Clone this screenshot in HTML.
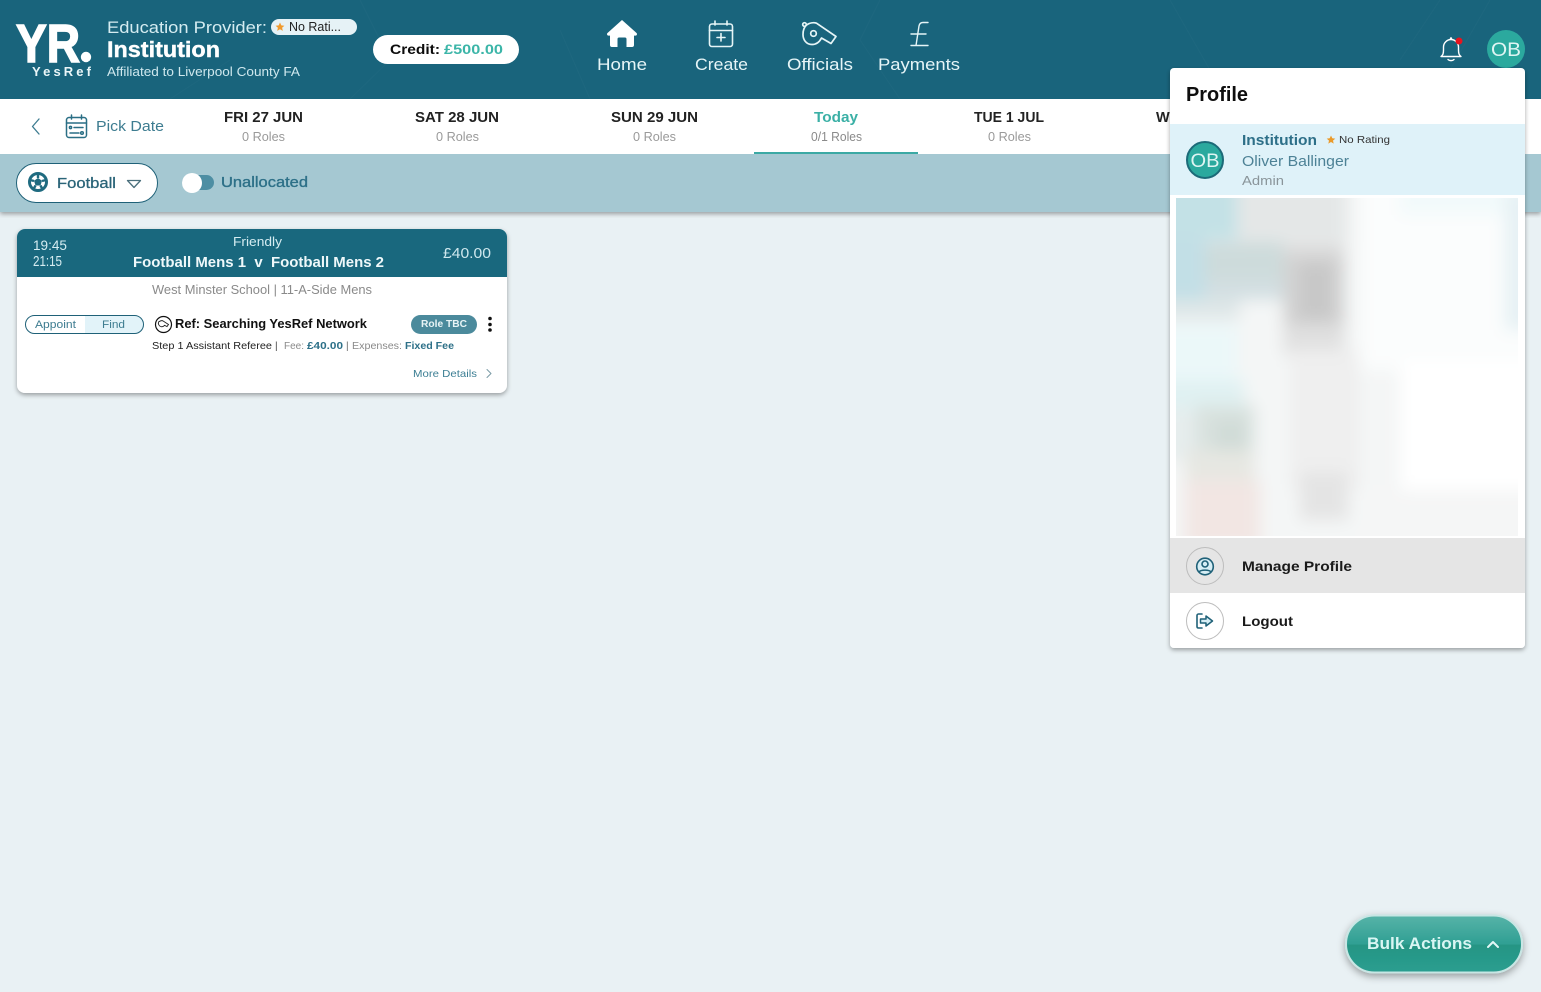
<!DOCTYPE html>
<html lang="en">
<head>
<meta charset="utf-8">
<title>YesRef</title>
<style>
html,body{margin:0;padding:0;width:1541px;height:992px;overflow:hidden;background:#e9f1f4}
svg{display:block}
text{font-family:"Liberation Sans",sans-serif;white-space:pre}
.b{font-weight:700}
</style>
</head>
<body>
<svg width="1541" height="992" viewBox="0 0 1541 992" xmlns="http://www.w3.org/2000/svg">
<defs>
<filter id="sh" x="-10%" y="-10%" width="120%" height="120%"><feDropShadow dx="0" dy="2" stdDeviation="2.5" flood-color="#000" flood-opacity=".35"/></filter>
<filter id="sh2" x="-10%" y="-30%" width="120%" height="170%"><feDropShadow dx="0" dy="3" stdDeviation="4" flood-color="#000" flood-opacity=".35"/></filter>
<filter id="bl" x="-5%" y="-5%" width="110%" height="110%"><feGaussianBlur stdDeviation="8"/></filter>
<clipPath id="im"><rect x="1176" y="198" width="342" height="338"/></clipPath>
<linearGradient id="bk" x1="0" y1="0" x2="0" y2="1"><stop offset="0" stop-color="#58b3a8"/><stop offset=".5" stop-color="#2f9f93"/><stop offset=".52" stop-color="#269584"/><stop offset="1" stop-color="#2a9e90"/></linearGradient>
</defs>

<rect width="1541" height="992" fill="#e9f1f4"/>

<!-- header -->
<rect width="1541" height="99" fill="#19647c"/>
<g stroke="#fff" stroke-opacity=".022" fill="none">
<path d="M1170 0L1210 70M1440 0L1400 60M1490 0L1450 70M880 0L860 40L900 99M560 30L590 99M360 0L390 60L350 99M170 99L230 60"/>
</g>

<!-- logo -->
<text x="16" y="62" class="b" font-size="54" fill="#fff" stroke="#fff" stroke-width="1.600" textLength="64" lengthAdjust="spacingAndGlyphs">YR</text>
<circle cx="86" cy="57" r="5.200" fill="#fff"/>
<text x="32" y="76" class="b" font-size="13" fill="#eaf6f8" textLength="59" lengthAdjust="spacing">YesRef</text>

<text x="107" y="33" font-size="16.500" fill="#d5ecf1" textLength="160" lengthAdjust="spacingAndGlyphs">Education Provider:</text>
<rect x="271" y="19" width="86" height="16" rx="8" fill="#e6f2f6"/>
<path d="M280 22.500l1.300 2.900 3.100.3-2.300 2.100.7 3.100-2.800-1.600-2.800 1.600.7-3.100-2.300-2.100 3.100-.3z" fill="#f09a2e"/>
<text x="289" y="31" font-size="12.500" fill="#222" textLength="52" lengthAdjust="spacingAndGlyphs">No Rati...</text>
<text x="107" y="57" class="b" font-size="22" fill="#fff" stroke="#fff" stroke-width=".4" textLength="113" lengthAdjust="spacingAndGlyphs">Institution</text>
<text x="107" y="76" font-size="12.500" fill="#cfe8ee" textLength="193" lengthAdjust="spacingAndGlyphs">Affiliated to Liverpool County FA</text>

<rect x="373" y="35" width="146" height="29" rx="14.500" fill="#fff"/>
<text x="390" y="54" class="b" font-size="14" fill="#0c0c0c" textLength="50" lengthAdjust="spacingAndGlyphs">Credit:</text>
<text x="444" y="54" class="b" font-size="14" fill="#3bb5a8" textLength="59" lengthAdjust="spacingAndGlyphs">£500.00</text>

<!-- nav -->
<path d="M622 20l14.500 13c1 1 .4 2.600-.9 2.600H634v9.400c0 1.200-.7 2-2 2h-5.500v-8c0-1-.7-1.500-1.500-1.500h-6c-.8 0-1.500.5-1.500 1.500v8H612c-1.300 0-2-.8-2-2v-9.400h-1.600c-1.300 0-1.900-1.600-.9-2.600z" fill="#fff"/>
<text x="597" y="70" font-size="17" fill="#e6f5f7" textLength="50" lengthAdjust="spacingAndGlyphs">Home</text>

<g fill="none" stroke="#e6f5f7" stroke-width="1.600" stroke-linecap="round">
<rect x="709.500" y="24" width="23" height="22.500" rx="2.500"/>
<path d="M709.500 30.500h23M715 21v4M727 21v4M721 33.500v7.500M717 37.500h8"/>
</g>
<text x="695" y="70" font-size="17" fill="#e6f5f7" textLength="53" lengthAdjust="spacingAndGlyphs">Create</text>

<g fill="none" stroke="#e6f5f7" stroke-width="1.700" stroke-linejoin="round">
<path d="M806.500 25c3-2 7-2.800 10-1.800l19.500 13.300-5 7-9.500-5.500c-2 4-5.500 6.500-9.500 6.500-6 0-9-5-9-10 0-4 1.200-7.500 3.500-9.500z"/>
<circle cx="813.500" cy="33.500" r="2.800"/>
<circle cx="804.500" cy="24.500" r="1.800"/>
</g>
<text x="787" y="70" font-size="17" fill="#e6f5f7" textLength="66" lengthAdjust="spacingAndGlyphs">Officials</text>

<path d="M928 22.500h-5c-2.500 0-3.600 1.500-4 3.500L916 45.500M911 34h15M911 45.500h17" fill="none" stroke="#e6f5f7" stroke-width="1.400" stroke-linecap="round" stroke-linejoin="round"/>
<text x="878" y="70" font-size="17" fill="#e6f5f7" textLength="82" lengthAdjust="spacingAndGlyphs">Payments</text>

<!-- bell + avatar -->
<path d="M1441 56.500c2-1.500 2.500-3 2.500-6.500v-3c0-4 3.500-7.500 7.500-7.500s7.500 3.500 7.500 7.500v3c0 3.500.5 5 2.500 6.500zM1448 59.500c1.500 1.500 4.500 1.500 6 0" fill="none" stroke="#fff" stroke-width="1.400" stroke-linejoin="round" stroke-linecap="round"/>
<circle cx="1451" cy="38.500" r="1.200" fill="#fff"/>
<circle cx="1459" cy="41" r="3.500" fill="#e8141f"/>
<circle cx="1506" cy="49" r="19" fill="#2ba99e"/>
<text x="1491" y="56" font-size="19" fill="#dff5f3" textLength="30" lengthAdjust="spacingAndGlyphs">OB</text>

<!-- filter bar (behind date bar) -->
<rect y="154" width="1541" height="58" fill="#a5c8d2" filter="url(#sh)"/>

<!-- date bar -->
<rect y="99" width="1541" height="55" fill="#fff"/>
<path d="M39 119l-6.500 7.500 6.500 7.500" fill="none" stroke="#3d7c90" stroke-width="1.300" stroke-linecap="round" stroke-linejoin="round"/>
<g fill="none" stroke="#2a6f85" stroke-width="1.500" stroke-linecap="round">
<rect x="66.500" y="117.500" width="20" height="20" rx="2.500"/>
<path d="M66.500 123h20M71.500 115v4M81.500 115v4M74 127.500h9M70 133h9"/>
<circle cx="70.500" cy="127.500" r="1.100"/>
<circle cx="82" cy="133" r="1.300"/>
</g>
<text x="96" y="131" font-size="14.500" fill="#3d7c90" textLength="68" lengthAdjust="spacingAndGlyphs">Pick Date</text>

<text x="224" y="122" class="b" font-size="14.500" fill="#222" textLength="79" lengthAdjust="spacingAndGlyphs">FRI 27 JUN</text>
<text x="242" y="141" font-size="12.500" fill="#9a9a9a" textLength="43" lengthAdjust="spacingAndGlyphs">0 Roles</text>
<text x="415" y="122" class="b" font-size="14.500" fill="#222" textLength="84" lengthAdjust="spacingAndGlyphs">SAT 28 JUN</text>
<text x="436" y="141" font-size="12.500" fill="#9a9a9a" textLength="43" lengthAdjust="spacingAndGlyphs">0 Roles</text>
<text x="611" y="122" class="b" font-size="14.500" fill="#222" textLength="87" lengthAdjust="spacingAndGlyphs">SUN 29 JUN</text>
<text x="633" y="141" font-size="12.500" fill="#9a9a9a" textLength="43" lengthAdjust="spacingAndGlyphs">0 Roles</text>
<text x="814" y="122" class="b" font-size="14.500" fill="#3bb0a6" textLength="44" lengthAdjust="spacingAndGlyphs">Today</text>
<text x="811" y="141" font-size="12.500" fill="#8a8a8a" textLength="51" lengthAdjust="spacingAndGlyphs">0/1 Roles</text>
<rect x="754" y="152" width="164" height="2" fill="#3ba9a4"/>
<text x="974" y="122" class="b" font-size="14.500" fill="#222" textLength="70" lengthAdjust="spacingAndGlyphs">TUE 1 JUL</text>
<text x="988" y="141" font-size="12.500" fill="#9a9a9a" textLength="43" lengthAdjust="spacingAndGlyphs">0 Roles</text>
<text x="1156" y="122" class="b" font-size="14.500" fill="#222">WED</text>

<!-- filters -->
<rect x="16.500" y="163.500" width="141" height="39" rx="19.500" fill="#fff" stroke="#1f6178"/>
<circle cx="38" cy="182" r="8.500" fill="#fff" stroke="#1f6b80" stroke-width="3"/>
<path d="M38 178l4 2.800-1.500 4.700h-5l-1.500-4.700z" fill="#1f6b80"/>
<path d="M38 173v5M30 180l4 1M46 180l-4 1M33 190l2.500-4.500M43 190l-2.500-4.500" stroke="#1f6b80" stroke-width="2.400"/>
<text x="57" y="188" font-size="15" fill="#2a6478" textLength="59" lengthAdjust="spacingAndGlyphs" style="stroke:#2a6478;stroke-width:.3">Football</text>
<path d="M127.500 180.500h13l-6.500 7z" fill="none" stroke="#4a6f7c" stroke-width="1.300" stroke-linejoin="round"/>
<rect x="182" y="175" width="32" height="15" rx="7.500" fill="#4d8ea3"/>
<circle cx="192" cy="183" r="10" fill="#fff"/>
<text x="221" y="187" font-size="14.500" fill="#2d7088" textLength="87" lengthAdjust="spacingAndGlyphs" style="stroke:#2d7088;stroke-width:.35">Unallocated</text>

<!-- card -->
<rect x="17" y="229" width="490" height="164" rx="8" fill="#fff" filter="url(#sh)"/>
<path d="M17 277v-40a8 8 0 0 1 8-8h474a8 8 0 0 1 8 8v40z" fill="#19687e"/>
<text x="33" y="250" font-size="14" fill="#d5ecf1" textLength="34" lengthAdjust="spacingAndGlyphs">19:45</text>
<text x="33" y="266" font-size="15" fill="#d5ecf1" textLength="29" lengthAdjust="spacingAndGlyphs">21:15</text>
<text x="233" y="246" font-size="12.500" fill="#d5ecf1" textLength="49" lengthAdjust="spacingAndGlyphs">Friendly</text>
<text x="133" y="267" class="b" font-size="14.500" fill="#eef8fa" textLength="251" lengthAdjust="spacingAndGlyphs">Football Mens 1  v  Football Mens 2</text>
<text x="443" y="258" font-size="14.500" fill="#cfe8ee" textLength="48" lengthAdjust="spacingAndGlyphs">£40.00</text>
<text x="152" y="294" font-size="12.500" fill="#8a8a8a" textLength="220" lengthAdjust="spacingAndGlyphs">West Minster School | 11-A-Side Mens</text>

<path d="M85 315.500h49.500a9 9 0 0 1 0 18H85z" fill="#e2f3f9"/>
<rect x="25.500" y="315.500" width="118" height="18" rx="9" fill="none" stroke="#1f6178"/>
<text x="35" y="328" font-size="11" fill="#3d7c90" textLength="41" lengthAdjust="spacingAndGlyphs">Appoint</text>
<text x="102" y="328" font-size="11" fill="#3d7c90" textLength="23" lengthAdjust="spacingAndGlyphs">Find</text>

<circle cx="163.500" cy="324.500" r="8" fill="none" stroke="#111" stroke-width="1.200"/>
<path d="M158.500 322c2-1.500 4-1.500 5-.8l5 3.300-1.500 2-2.500-1.200c-1 1.500-2.500 1.700-4 1.200-1.800-.8-2.500-3-2-4.500z" fill="none" stroke="#222" stroke-width=".9"/>
<text x="175" y="328" class="b" font-size="12.500" fill="#111" textLength="192" lengthAdjust="spacingAndGlyphs">Ref: Searching YesRef Network</text>
<rect x="411" y="315" width="66" height="19" rx="9.500" fill="#4b8a9c"/>
<text x="421" y="327" class="b" font-size="10" fill="#e8f4f6" textLength="46" lengthAdjust="spacingAndGlyphs">Role TBC</text>
<circle cx="490" cy="318.500" r="1.800" fill="#111"/><circle cx="490" cy="324.500" r="1.800" fill="#111"/><circle cx="490" cy="330" r="1.800" fill="#111"/>

<text x="152" y="349" font-size="10" fill="#222" textLength="120" lengthAdjust="spacingAndGlyphs">Step 1 Assistant Referee</text>
<text x="275" y="349" font-size="10" fill="#444">|</text>
<text x="284" y="349" font-size="10" fill="#8a8a8a" textLength="20" lengthAdjust="spacingAndGlyphs">Fee:</text>
<text x="307" y="349" class="b" font-size="10" fill="#2d7088" textLength="36" lengthAdjust="spacingAndGlyphs">£40.00</text>
<text x="346" y="349" font-size="10" fill="#666">|</text>
<text x="352" y="349" font-size="10" fill="#8a8a8a" textLength="50" lengthAdjust="spacingAndGlyphs">Expenses:</text>
<text x="405" y="349" class="b" font-size="10" fill="#2d7088" textLength="49" lengthAdjust="spacingAndGlyphs">Fixed Fee</text>
<text x="413" y="377" font-size="10.500" fill="#3d7f94" textLength="64" lengthAdjust="spacingAndGlyphs">More Details</text>
<path d="M487 369.500l4 4-4 4" fill="none" stroke="#7a9aa5" stroke-linecap="round" stroke-linejoin="round"/>

<!-- profile panel -->
<rect x="1170" y="68" width="355" height="580" rx="4" fill="#fff" filter="url(#sh)"/>
<text x="1186" y="101" class="b" font-size="20" fill="#0e0e0e" textLength="62" lengthAdjust="spacingAndGlyphs">Profile</text>
<rect x="1170" y="124" width="355" height="71" fill="#dff2f9"/>
<circle cx="1205" cy="160" r="18" fill="#2ba99e" stroke="#1c6a78" stroke-width="2"/>
<text x="1190.500" y="167" font-size="19" fill="#dff5f3" textLength="29" lengthAdjust="spacingAndGlyphs">OB</text>
<text x="1242" y="145" class="b" font-size="14.500" fill="#2d6f88" textLength="75" lengthAdjust="spacingAndGlyphs">Institution</text>
<path d="M1331 135.500l1.300 2.800 3 .3-2.300 2 .7 3-2.700-1.600-2.700 1.600.7-3-2.300-2 3-.3z" fill="#ea9a2a"/>
<text x="1339" y="143" font-size="10.500" fill="#333" textLength="51" lengthAdjust="spacingAndGlyphs">No Rating</text>
<text x="1242" y="166" font-size="14.500" fill="#4d8296" textLength="107" lengthAdjust="spacingAndGlyphs">Oliver Ballinger</text>
<text x="1242" y="185" font-size="12.500" fill="#8a959a" textLength="42" lengthAdjust="spacingAndGlyphs">Admin</text>

<!-- blurred image -->
<rect x="1176" y="198" width="342" height="338" fill="#f4f6f6"/>
<g clip-path="url(#im)">
<g filter="url(#bl)">
<rect x="1150" y="180" width="400" height="380" fill="#f4f6f6"/>
<rect x="1360" y="180" width="190" height="190" fill="#fbfdfd"/>
<rect x="1400" y="360" width="150" height="130" fill="#fff"/>
<rect x="1400" y="180" width="150" height="35" fill="#f2fafb"/>
<rect x="1505" y="190" width="40" height="140" fill="#e6f1f4"/>
<rect x="1237" y="180" width="110" height="62" fill="#e4e7e7"/>
<rect x="1150" y="180" width="87" height="60" fill="#c3e1e6"/>
<rect x="1150" y="240" width="55" height="60" fill="#c2dfe6"/>
<rect x="1205" y="242" width="78" height="40" fill="#cddbdb"/>
<rect x="1205" y="280" width="78" height="20" fill="#d3dfe2"/>
<rect x="1283" y="244" width="62" height="30" fill="#dadada"/>
<rect x="1283" y="258" width="62" height="74" fill="#d2d2d2"/>
<rect x="1300" y="262" width="32" height="58" fill="#c8c8c8"/>
<rect x="1283" y="325" width="62" height="30" fill="#e0e0e0"/>
<rect x="1150" y="300" width="90" height="20" fill="#dfe7e8"/>
<rect x="1150" y="325" width="87" height="75" fill="#ebf8f9"/>
<rect x="1150" y="380" width="95" height="30" fill="#e0f1f2"/>
<rect x="1290" y="350" width="70" height="140" fill="#efefef"/>
<rect x="1150" y="410" width="45" height="50" fill="#e6eded"/>
<rect x="1195" y="405" width="60" height="55" fill="#d9e2df"/>
<rect x="1215" y="420" width="30" height="35" fill="#d0dbd7"/>
<rect x="1185" y="450" width="70" height="30" fill="#e6e7e2"/>
<rect x="1185" y="480" width="75" height="70" fill="#f2e6e3"/>
<rect x="1300" y="472" width="48" height="48" fill="#e4e4e4"/>
<rect x="1360" y="490" width="190" height="60" fill="#f5f6f6"/>
</g>
</g>

<rect x="1170" y="538" width="355" height="55" fill="#e5e5e5"/>
<circle cx="1205" cy="566" r="18.500" fill="#e5e5e5" stroke="#bdbdbd"/>
<g fill="#d6eef5" stroke="#1f6178" stroke-width="1.600">
<circle cx="1205" cy="566.500" r="8.300"/>
<circle cx="1205" cy="564" r="3"/>
<path d="M1199 572c1.500-2.500 10.500-2.500 12 0" fill="none"/>
</g>
<text x="1242" y="571" class="b" font-size="14" fill="#1a1a1a" textLength="110" lengthAdjust="spacingAndGlyphs">Manage Profile</text>
<circle cx="1205" cy="621" r="18.500" fill="#fff" stroke="#bdbdbd"/>
<path d="M1202 614h-3.500c-1 0-1.500.8-1.500 1.500v11c0 .8.500 1.500 1.500 1.500h3.500" fill="none" stroke="#1f6178" stroke-width="1.600" stroke-linecap="round"/>
<path d="M1200.500 619h5.500v-3l6.500 5-6.500 5v-3h-5.500z" fill="#d6eef5" stroke="#1f6178" stroke-width="1.500" stroke-linejoin="round"/>
<text x="1242" y="626" class="b" font-size="14" fill="#1a1a1a" textLength="51" lengthAdjust="spacingAndGlyphs">Logout</text>

<!-- bulk actions -->
<rect x="1346" y="915.500" width="176" height="57" rx="28.500" fill="url(#bk)" stroke="#c8e6e4" stroke-width="2" filter="url(#sh2)"/>
<text x="1367" y="949" class="b" font-size="17" fill="#d9f6f3" textLength="105" lengthAdjust="spacingAndGlyphs">Bulk Actions</text>
<path d="M1488 947l5-5 5 5" fill="none" stroke="#e4f8f6" stroke-width="2" stroke-linecap="round" stroke-linejoin="round"/>
</svg>
</body>
</html>
